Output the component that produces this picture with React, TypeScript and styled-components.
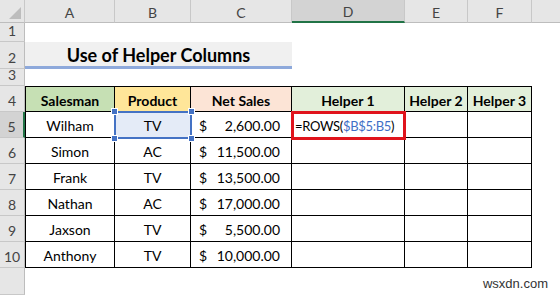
import React from "react";
import styled, { createGlobalStyle, css } from "styled-components";

const GlobalStyle = createGlobalStyle`
  html, body {
    margin: 0;
    padding: 0;
    background: #ffffff;
  }
  * {
    box-sizing: border-box;
  }
`;

const Sheet = styled.div`
  display: grid;
  grid-template-columns: 25px 90px 76px 101px 113px 63px 64px 1fr;
  grid-template-rows: 23px 19px 27px 17px repeat(7, 26px) 1fr;
  width: 560px;
  height: 295px;
  overflow: hidden;
  font-family: Lato, "Open Sans", sans-serif;
  font-size: 14px;
  color: #000;
  background: #fff;
`;

const Corner = styled.div`
  background: #e6e6e6;
  border-right: 1px solid #c8c8c8;
  border-bottom: 1px solid #bdbdbd;
  display: flex;
  align-items: flex-end;
  justify-content: flex-end;
  padding: 0 3px 3px 0;
`;

const ColHead = styled.div<{ $active?: boolean }>`
  background: ${({ $active }) => ($active ? "#d3d3d3" : "#e6e6e6")};
  border-right: 1px solid #c8c8c8;
  border-bottom: ${({ $active }) => ($active ? "2px solid #217346" : "1px solid #bdbdbd")};
  display: flex;
  align-items: center;
  justify-content: center;
  color: #444;
  font-size: 14px;
  padding-top: 2px;
`;

const HeadFiller = styled.div`
  background: #e6e6e6;
  border-bottom: 1px solid #bdbdbd;
`;

const RowHead = styled.div<{ $active?: boolean }>`
  background: ${({ $active }) => ($active ? "#d3d3d3" : "#e6e6e6")};
  border-bottom: 1px solid #c8c8c8;
  border-right: ${({ $active }) => ($active ? "2px solid #217346" : "1px solid #bdbdbd")};
  display: flex;
  align-items: flex-end;
  justify-content: center;
  padding-bottom: 2px;
  color: #444;
  font-size: 14px;
`;

const Blank = styled.div<{ $span?: number }>`
  grid-column: span ${({ $span }) => $span ?? 1};
`;

const Title = styled.div`
  grid-column: span 3;
  background: #f0f0f0;
  border-bottom: 3px solid #8ea9db;
  display: flex;
  align-items: center;
  justify-content: center;
  font-weight: 700;
  font-size: 18px;
  padding-top: 1px;
`;

const Cell = styled.div<{
  $bg?: string;
  $first?: boolean;
  $top?: boolean;
  $bold?: boolean;
  $align?: "center" | "left" | "money";
}>`
  position: relative;
  display: flex;
  align-items: center;
  justify-content: center;
  background: ${({ $bg }) => $bg ?? "#fff"};
  border-right: 1px solid #000;
  border-bottom: 1px solid #000;
  ${({ $first }) => $first && css`border-left: 1px solid #000;`}
  ${({ $top }) => $top && css`border-top: 1px solid #000;`}
  font-weight: ${({ $bold }) => ($bold ? 700 : 400)};
  padding-top: 2px;
  white-space: nowrap;
  ${({ $align }) =>
    $align === "left" &&
    css`
      justify-content: flex-start;
      padding-left: 3px;
    `}
  ${({ $align }) =>
    $align === "money" &&
    css`
      justify-content: space-between;
      padding: 2px 11px 0 8px;
    `}
`;

const Selection = styled.div`
  position: absolute;
  top: -1px;
  left: -1px;
  right: -2px;
  bottom: -2px;
  border: 2px solid #4472c4;
  background: #e4ebf7;
  z-index: 2;
`;

const Handle = styled.span<{ $x: "left" | "right"; $y: "top" | "bottom" }>`
  position: absolute;
  width: 7px;
  height: 7px;
  background: #4472c4;
  border: 1px solid #fff;
  ${({ $x }) => $x}: -5px;
  ${({ $y }) => $y}: -5px;
`;

const CellText = styled.span`
  position: relative;
  z-index: 3;
`;

const Formula = styled.span`
  font-size: 13px;
  letter-spacing: -0.3px;
`;

const Highlight = styled.div`
  position: absolute;
  top: -1px;
  left: -1px;
  right: -2px;
  bottom: -3px;
  border: 3px solid #e0141c;
  pointer-events: none;
  z-index: 2;
`;

const Ref = styled.span`
  color: #3f6fc6;
`;

const Watermark = styled.div`
  grid-column: span 7;
  display: flex;
  align-items: center;
  justify-content: flex-end;
  padding: 4px 12px 0 0;
  font-family: "Liberation Sans", Arial, sans-serif;
  font-size: 13px;
  color: #333;
`;

const columns = ["A", "B", "C", "D", "E", "F"];

const headers = [
  { label: "Salesman", bg: "#c6e0b4" },
  { label: "Product", bg: "#ffe699" },
  { label: "Net Sales", bg: "#fce4d6" },
  { label: "Helper 1", bg: "#e2efda" },
  { label: "Helper 2", bg: "#e2efda" },
  { label: "Helper 3", bg: "#e2efda" },
];

const sales = [
  { name: "Wilham", product: "TV", amount: "2,600.00" },
  { name: "Simon", product: "AC", amount: "11,500.00" },
  { name: "Frank", product: "TV", amount: "13,500.00" },
  { name: "Nathan", product: "AC", amount: "17,000.00" },
  { name: "Jaxson", product: "TV", amount: "5,500.00" },
  { name: "Anthony", product: "TV", amount: "10,000.00" },
];

const CornerMark = () => (
  <svg width="12" height="12" viewBox="0 0 12 12">
    <polygon points="12,0 12,12 0,12" fill="#bdbdbd" />
  </svg>
);

const App = () => {
  return (
    <>
      <GlobalStyle />
      <Sheet>
        <Corner>
          <CornerMark />
        </Corner>
        {columns.map((c) => (
          <ColHead key={c} $active={c === "D"}>
            {c}
          </ColHead>
        ))}
        <HeadFiller />

        <RowHead>1</RowHead>
        <Blank $span={7} />

        <RowHead>2</RowHead>
        <Title>Use of Helper Columns</Title>
        <Blank $span={4} />

        <RowHead>3</RowHead>
        <Blank $span={7} />

        <RowHead>4</RowHead>
        {headers.map((h, i) => (
          <Cell key={h.label} $bg={h.bg} $bold $top $first={i === 0}>
            {h.label}
          </Cell>
        ))}
        <Blank />

        {sales.map((row, i) => {
          const first = i === 0;
          return (
            <React.Fragment key={row.name}>
              <RowHead $active={first}>{i + 5}</RowHead>
              <Cell $first>{row.name}</Cell>
              <Cell>
                {first && (
                  <Selection>
                    <Handle $x="left" $y="top" />
                    <Handle $x="right" $y="top" />
                    <Handle $x="left" $y="bottom" />
                    <Handle $x="right" $y="bottom" />
                  </Selection>
                )}
                <CellText>{row.product}</CellText>
              </Cell>
              <Cell $align="money">
                <span>$</span>
                <span>{row.amount}</span>
              </Cell>
              <Cell $align="left">
                {first && (
                  <>
                    <Formula>
                      =ROWS(<Ref>$B$5:B5</Ref>)
                    </Formula>
                    <Highlight />
                  </>
                )}
              </Cell>
              <Cell />
              <Cell />
              <Blank />
            </React.Fragment>
          );
        })}

        <RowHead />
        <Watermark>wsxdn.com</Watermark>
      </Sheet>
    </>
  );
};

export default App;
